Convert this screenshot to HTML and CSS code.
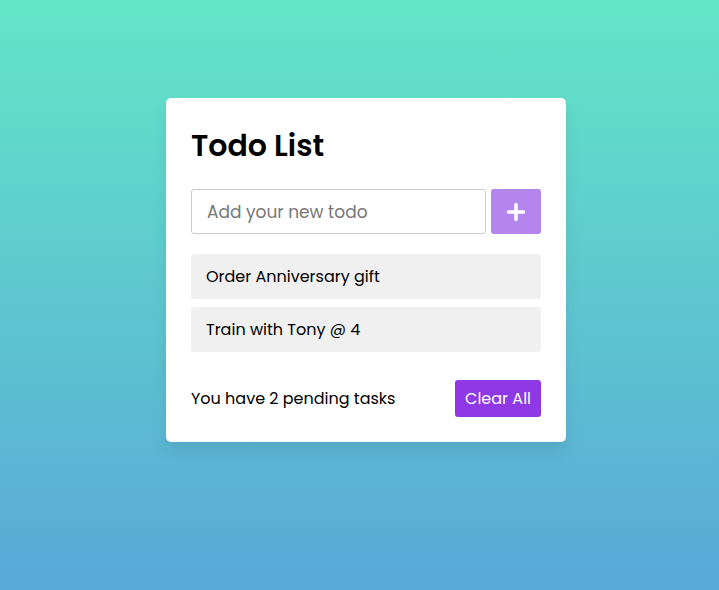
FILE: index.html
```html
<!DOCTYPE html>
<html lang="en">
<head>
    <meta charset="UTF-8">
    <meta name="viewport" content="width=device-width, initial-scale=1.0">
    <title>Todo List</title>
    <link rel="stylesheet" href="styles.css">
</head>
<body>
    <div class="wrapper">
        <header class="title">Todo List</header>

        <div class="input-field">
            <input type="text" placeholder="Add your new todo">
            <button class="add-btn" aria-label="Add">
                <svg width="20" height="20" viewBox="0 0 20 20">
                    <path d="M10 2.5v15M2.5 10h15" stroke="#fff" stroke-width="3.5" stroke-linecap="round"/>
                </svg>
            </button>
        </div>

        <ul class="todo-list">
            <li>Order Anniversary gift</li>
            <li>Train with Tony @ 4</li>
        </ul>

        <div class="footer">
            <span>You have <span class="pending">2</span> pending tasks</span>
            <button class="clear-btn">Clear All</button>
        </div>
    </div>
</body>
</html>
```

FILE: styles.css
```css
* {
    margin: 0;
    padding: 0;
    box-sizing: border-box;
}

body {
    font-family: 'Poppins', 'Open Sans', sans-serif;
    height: 590px;
    display: flex;
    justify-content: center;
    padding: 98px 0 0 13px;
    background: linear-gradient(to bottom, #63e6c7, #59a8d8);
}

.wrapper {
    width: 400px;
    height: 344px;
    background: #fff;
    border-radius: 5px;
    padding: 25px;
    box-shadow: 0 10px 16px rgba(0, 0, 0, 0.08);
}

.title {
    font-size: 30px;
    font-weight: 600;
    line-height: 40px;
    margin-top: 3px;
}

.input-field {
    display: flex;
    gap: 5px;
    margin-top: 23px;
    height: 45px;
}

.input-field input {
    flex: 1;
    min-width: 0;
    height: 100%;
    border: 1px solid #ccc;
    border-radius: 3px;
    padding-left: 15px;
    font-family: inherit;
    font-size: 17px;
    outline: none;
}

.input-field input::placeholder {
    color: #777;
}

.add-btn {
    flex-shrink: 0;
    width: 50px;
    height: 100%;
    border: none;
    border-radius: 3px;
    background: #b585ee;
    display: flex;
    align-items: center;
    justify-content: center;
    cursor: pointer;
}

.todo-list {
    list-style: none;
    margin-top: 20px;
    display: flex;
    flex-direction: column;
    gap: 8px;
}

.todo-list li {
    height: 45px;
    line-height: 45px;
    background: #f0f0f0;
    border-radius: 3px;
    padding: 0 15px;
    font-size: 16px;
}

.footer {
    display: flex;
    justify-content: space-between;
    align-items: center;
    margin-top: 28px;
    font-size: 16px;
}

.clear-btn {
    background: #8e38e6;
    color: #fff;
    border: none;
    border-radius: 3px;
    padding: 0 10px;
    height: 37px;
    font-family: inherit;
    font-size: 16px;
    cursor: pointer;
}
```
